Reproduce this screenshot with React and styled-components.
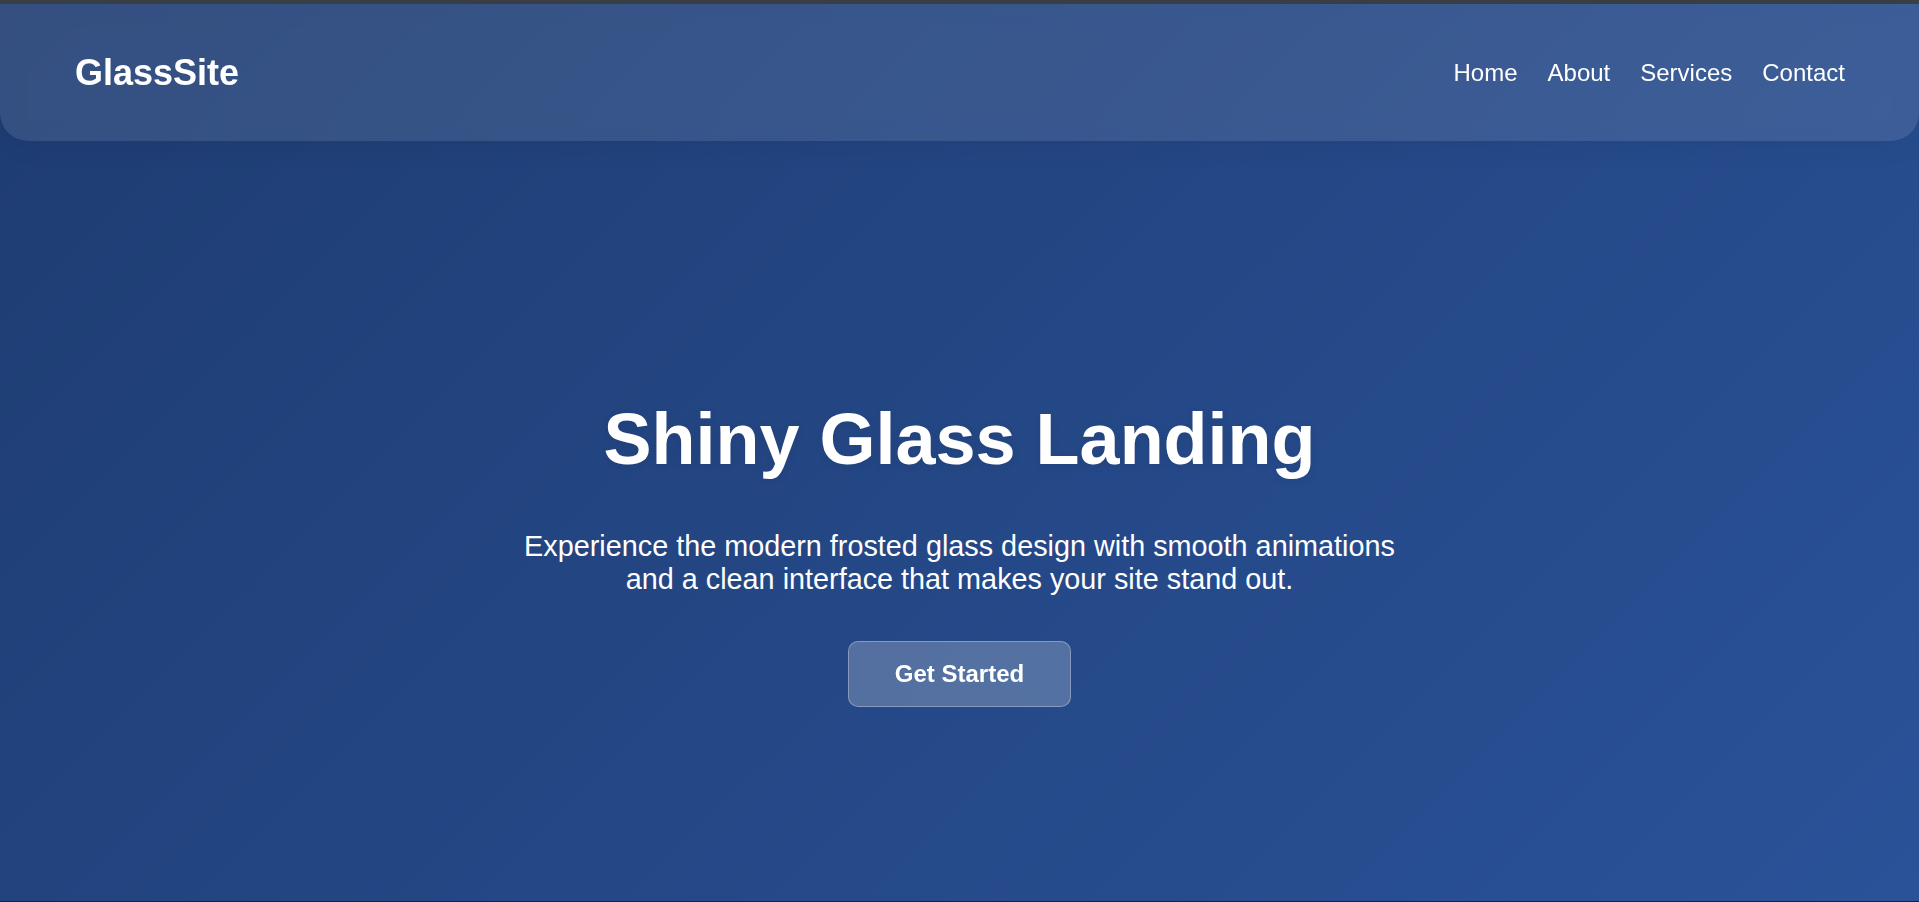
import React from 'react';
import styled, { createGlobalStyle } from 'styled-components';

const GlobalStyle = createGlobalStyle`
  * { box-sizing: border-box; }
  html, body { margin: 0; padding: 0; }
  body {
    font-family: "Liberation Sans", Arial, sans-serif;
    background: #1e3c72;
  }
`;

let Page = styled.div`
  min-height: 100vh;
  display: flex;
  flex-direction: column;
  background: linear-gradient(135deg, #1e3c72 0%, #2a5298 100%);
  color: #fff;
  border-top: 4px solid #3a4046;
  border-bottom: 1px solid #1a2236;
`;

let Header = styled.header`
  height: 137px;
  display: flex;
  align-items: center;
  justify-content: space-between;
  padding: 0 74px 0 75px;
  background: rgba(255, 255, 255, 0.1);
  backdrop-filter: blur(10px);
  border-radius: 0 0 28px 28px;
  box-shadow: 0 4px 30px rgba(0, 0, 0, 0.06);
`;

let Logo = styled.div`
  font-size: 36px;
  font-weight: 700;
`;

let Nav = styled.nav`
  display: flex;
  gap: 30px;
`;

let NavLink = styled.a`
  color: #fff;
  text-decoration: none;
  font-size: 24px;
`;

let Hero = styled.main`
  flex: 1;
  display: flex;
  flex-direction: column;
  align-items: center;
  padding-top: 257px;
  text-align: center;
`;

let Title = styled.h1`
  margin: 0 0 50px;
  font-size: 72px;
  font-weight: 700;
  text-shadow: 0 2px 8px rgba(0, 0, 0, 0.08);
`;

let Lead = styled.p`
  margin: 0 0 45px;
  max-width: 900px;
  font-size: 28.8px;
`;

let Button = styled.button`
  font-family: inherit;
  font-size: 24px;
  font-weight: 700;
  color: #fff;
  padding: 18px 46px;
  background: rgba(255, 255, 255, 0.22);
  border: 1px solid rgba(255, 255, 255, 0.3);
  border-radius: 10px;
  backdrop-filter: blur(10px);
  cursor: pointer;
`;

const links = ['Home', 'About', 'Services', 'Contact'];

export default function App() {
  return (
    <>
      <GlobalStyle />
      <Page>
        <Header>
          <Logo>GlassSite</Logo>
          <Nav>
            {links.map((l) => (
              <NavLink key={l} href="#">{l}</NavLink>
            ))}
          </Nav>
        </Header>
        <Hero>
          <Title>Shiny Glass Landing</Title>
          <Lead>
            Experience the modern frosted glass design with smooth animations and a clean interface that makes your site stand out.
          </Lead>
          <Button>Get Started</Button>
        </Hero>
      </Page>
    </>
  );
}
